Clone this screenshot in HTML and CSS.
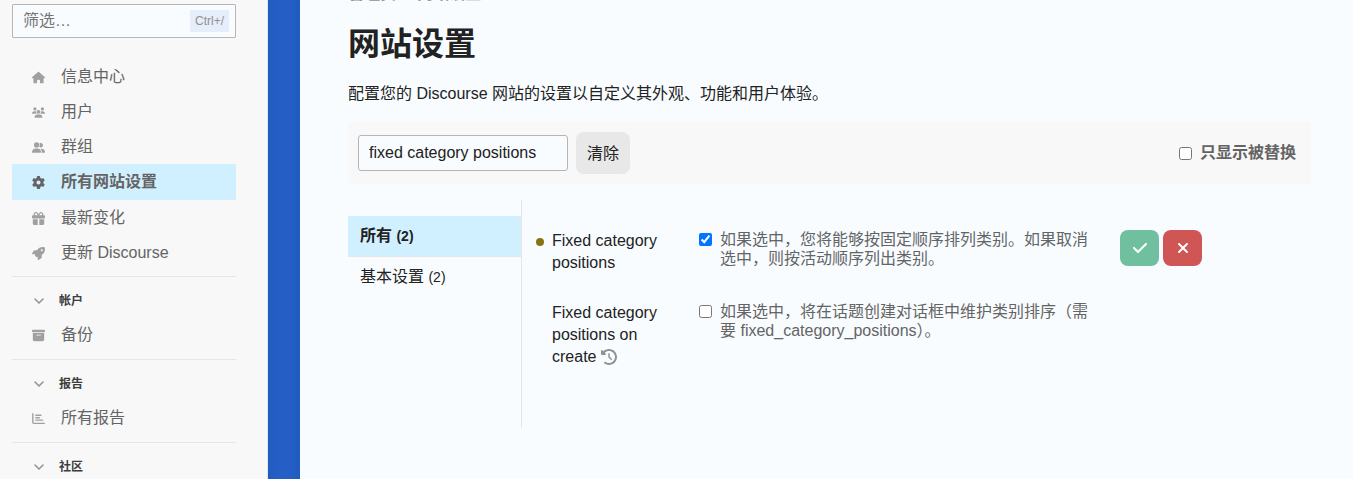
FILE: index.html
```html
<!DOCTYPE html>
<html lang="zh-CN">
<head>
<meta charset="utf-8">
<title>网站设置</title>
<link rel="stylesheet" href="styles.css">
</head>
<body>
<div class="layout">
  <aside class="sidebar">
    <div class="search">
      <input class="search-input" type="text" placeholder="筛选…" aria-label="筛选">
      <kbd class="shortcut">Ctrl+/</kbd>
    </div>
    <nav class="side-nav">
      <div class="group">
        <a class="link" href="#"><svg class="icon" viewBox="0 0 576 512"><path d="M575.8 255.5c0 18-15 32.1-32 32.1h-32l.7 160.2c0 2.7-.2 5.4-.5 8.1V472c0 22.1-17.9 40-40 40H392c-22.1 0-40-17.9-40-40V384c0-17.7-14.3-32-32-32H256c-17.7 0-32 14.3-32 32v88c0 22.1-17.9 40-40 40H104c-22.1 0-40-17.9-40-40V287.6H32c-18 0-32-14-32-32.1c0-9 3-17 10-24L266.4 8c7-7 15-8 22-8s15 2 21 7L564.8 231.5c8 7 12 15 11 24z"/></svg>信息中心</a>
        <a class="link" href="#"><svg class="icon" viewBox="0 0 640 512"><path d="M144 0a80 80 0 1 1 0 160A80 80 0 1 1 144 0zM512 0a80 80 0 1 1 0 160A80 80 0 1 1 512 0zM0 298.7C0 239.8 47.8 192 106.7 192h42.7c15.9 0 31 3.5 44.6 9.7c-1.3 7.2-1.9 14.7-1.9 22.3c0 38.2 16.8 72.5 43.3 96c-.2 0-.4 0-.7 0H21.3C9.6 320 0 310.4 0 298.7zM405.3 320c-.2 0-.4 0-.7 0c26.6-23.5 43.3-57.8 43.3-96c0-7.6-.7-15-1.9-22.3c13.6-6.3 28.7-9.7 44.6-9.7h42.7C592.2 192 640 239.8 640 298.7c0 11.8-9.6 21.3-21.3 21.3H405.3zM224 224a96 96 0 1 1 192 0 96 96 0 1 1 -192 0zM128 485.3C128 411.7 187.7 352 261.3 352H378.7C452.3 352 512 411.7 512 485.3c0 14.7-11.9 26.7-26.7 26.7H154.7c-14.7 0-26.7-11.9-26.7-26.7z"/></svg>用户</a>
        <a class="link" href="#"><svg class="icon" viewBox="0 0 640 512"><path d="M96 128a128 128 0 1 1 256 0A128 128 0 1 1 96 128zM0 482.3C0 383.8 79.8 304 178.3 304h91.4C368.2 304 448 383.8 448 482.3c0 16.4-13.3 29.7-29.7 29.7H29.7C13.3 512 0 498.7 0 482.3zM609.3 512H471.4c5.4-9.4 8.6-20.3 8.6-32v-8c0-60.7-27.1-115.2-69.8-151.8c2.4-.1 4.7-.2 7.1-.2h61.4C567.8 320 640 392.2 640 481.3c0 17-13.8 30.7-30.7 30.7zM432 256c-31 0-59-12.6-79.3-32.9C372.4 196.5 384 163.6 384 128c0-26.8-6.6-52.1-18.3-74.3C384.3 40.1 407.2 32 432 32c61.9 0 112 50.1 112 112s-50.1 112-112 112z"/></svg>群组</a>
        <a class="link active" href="#"><svg class="icon" viewBox="0 0 512 512"><path d="M495.9 166.6c3.2 8.7 .5 18.4-6.4 24.6l-43.3 39.4c1.1 8.3 1.7 16.8 1.7 25.4s-.6 17.1-1.7 25.4l43.3 39.4c6.9 6.2 9.6 15.9 6.4 24.6c-4.4 11.9-9.7 23.3-15.8 34.3l-4.7 8.1c-6.6 11-14 21.4-22.1 31.2c-5.9 7.2-15.7 9.6-24.5 6.8l-55.7-17.7c-13.4 10.3-28.2 18.9-44 25.4l-12.5 57.1c-2 9.1-9 16.3-18.2 17.8c-13.8 2.3-28 3.5-42.5 3.5s-28.7-1.2-42.5-3.5c-9.2-1.5-16.2-8.7-18.2-17.8l-12.5-57.1c-15.8-6.5-30.6-15.1-44-25.4L83.1 425.9c-8.8 2.8-18.6 .3-24.5-6.8c-8.1-9.8-15.5-20.2-22.1-31.2l-4.7-8.1c-6.1-11-11.4-22.4-15.8-34.3c-3.2-8.7-.5-18.4 6.4-24.6l43.3-39.4C64.6 273.1 64 264.6 64 256s.6-17.1 1.7-25.4L22.4 191.2c-6.9-6.2-9.6-15.9-6.4-24.6c4.4-11.9 9.7-23.3 15.8-34.3l4.7-8.1c6.6-11 14-21.4 22.1-31.2c5.9-7.2 15.7-9.6 24.5-6.8l55.7 17.7c13.4-10.3 28.2-18.9 44-25.4l12.5-57.1c2-9.1 9-16.3 18.2-17.8C227.3 1.2 241.5 0 256 0s28.7 1.2 42.5 3.5c9.2 1.5 16.2 8.7 18.2 17.8l12.5 57.1c15.8 6.5 30.6 15.1 44 25.4l55.7-17.7c8.8-2.8 18.6-.3 24.5 6.8c8.1 9.8 15.5 20.2 22.1 31.2l4.7 8.1c6.1 11 11.4 22.4 15.8 34.3zM256 336a80 80 0 1 0 0-160 80 80 0 1 0 0 160z"/></svg>所有网站设置</a>
        <a class="link" href="#"><svg class="icon" viewBox="0 0 512 512"><path d="M190.5 68.8L225.3 128H224 152c-22.1 0-40-17.9-40-40s17.9-40 40-40h2.2c14.9 0 28.8 7.9 36.3 20.8zM64 88c0 14.4 3.5 28 9.6 40H32c-17.7 0-32 14.3-32 32v64c0 17.7 14.3 32 32 32H480c17.7 0 32-14.3 32-32V160c0-17.7-14.3-32-32-32H438.4c6.1-12 9.6-25.6 9.6-40c0-48.6-39.4-88-88-88h-2.2c-31.9 0-61.5 16.9-77.7 44.4L256 85.5l-24.1-41C215.7 16.9 186.1 0 154.2 0H152C103.4 0 64 39.4 64 88zm336 0c0 22.1-17.9 40-40 40H288h-1.3l34.8-59.2C329.1 55.9 342.9 48 357.8 48H360c22.1 0 40 17.9 40 40zM32 288V464c0 26.5 21.5 48 48 48H224V288H32zM288 512H432c26.5 0 48-21.5 48-48V288H288V512z"/></svg>最新变化</a>
        <a class="link" href="#"><svg class="icon" viewBox="0 0 512 512"><path d="M156.6 384.9L125.7 354c-8.5-8.5-11.5-20.8-7.7-32.2c3-8.9 7-20.5 11.8-33.8L24 288c-8.6 0-16.6-4.6-20.9-12.1s-4.2-16.7 .2-24.1l52.5-88.5c13-21.9 36.5-35.3 61.9-35.3l82.3 0c2.4-4 4.8-7.7 7.2-11.3C289.1-4.1 411.1-8.1 483.9 5.3c11.6 2.1 20.6 11.2 22.8 22.8c13.4 72.9 9.3 194.8-111.4 276.7c-3.5 2.4-7.3 4.8-11.3 7.2v82.3c0 25.4-13.4 49-35.3 61.9l-88.5 52.5c-7.4 4.4-16.6 4.5-24.1 .2s-12.1-12.2-12.1-20.9V380.8c-14.1 4.9-26.4 8.9-35.7 11.9c-11.2 3.6-23.4 .5-31.8-7.8zM384 168a40 40 0 1 0 0-80 40 40 0 1 0 0 80z"/></svg>更新 Discourse</a>
      </div>
      <div class="group">
        <button class="heading" type="button"><svg class="chevron" viewBox="0 0 10 10"><path d="M1 3l4 4 4-4"/></svg>帐户</button>
        <a class="link" href="#"><svg class="icon" viewBox="0 0 512 512"><path fill-rule="evenodd" d="M32 32H480c17.7 0 32 14.3 32 32V96c0 17.7-14.3 32-32 32H32C14.3 128 0 113.7 0 96V64C0 46.3 14.3 32 32 32zM32 160H480V416c0 35.3-28.7 64-64 64H96c-35.3 0-64-28.7-64-64V160zm128 80c0 8.8 7.2 16 16 16H336c8.8 0 16-7.2 16-16s-7.2-16-16-16H176c-8.8 0-16 7.2-16 16z"/></svg>备份</a>
      </div>
      <div class="group">
        <button class="heading" type="button"><svg class="chevron" viewBox="0 0 10 10"><path d="M1 3l4 4 4-4"/></svg>报告</button>
        <a class="link" href="#"><svg class="icon lines" viewBox="0 0 512 512"><path d="M32 64V400c0 26 22 48 48 48H480M150 128H352M150 224H288M150 320H416"/></svg>所有报告</a>
      </div>
      <div class="group">
        <button class="heading" type="button"><svg class="chevron" viewBox="0 0 10 10"><path d="M1 3l4 4 4-4"/></svg>社区</button>
      </div>
    </nav>
  </aside>
  <div class="stripe"></div>
  <main class="main">
    <nav class="crumbs"><a href="#">管理员</a><span>›</span><a href="#">网站设置</a></nav>
    <h1 class="title">网站设置</h1>
    <p class="intro">配置您的 Discourse 网站的设置以自定义其外观、功能和用户体验。</p>
    <div class="controls">
      <input class="filter" type="text" value="fixed category positions" aria-label="搜索设置">
      <button class="clear" type="button">清除</button>
      <label class="overridden"><input class="check" type="checkbox">只显示被替换</label>
    </div>
    <div class="body">
      <nav class="categories">
        <a class="category current" href="#">所有 <span class="count">(2)</span></a>
        <a class="category" href="#">基本设置 <span class="count">(2)</span></a>
      </nav>
      <div class="settings">
        <div class="setting changed">
          <h3 class="name">Fixed category positions</h3>
          <label class="value"><input class="check" type="checkbox" checked><span>如果选中，您将能够按固定顺序排列类别。如果取消选中，则按活动顺序列出类别。</span></label>
          <div class="actions">
            <button class="action ok" type="button" aria-label="保存"><svg viewBox="0 0 448 512"><path d="M438.6 105.4c12.5 12.5 12.5 32.8 0 45.3l-256 256c-12.5 12.5-32.8 12.5-45.3 0l-128-128c-12.5-12.5-12.5-32.8 0-45.3s32.8-12.5 45.3 0L160 338.7 393.4 105.4c12.5-12.5 32.8-12.5 45.3 0z"/></svg></button>
            <button class="action cancel" type="button" aria-label="取消"><svg viewBox="0 0 384 512"><path d="M342.6 150.6c12.5-12.5 12.5-32.8 0-45.3s-32.8-12.5-45.3 0L192 210.7 86.6 105.4c-12.5-12.5-32.8-12.5-45.3 0s-12.5 32.8 0 45.3L146.7 256 41.4 361.4c-12.5 12.5-12.5 32.8 0 45.3s32.8 12.5 45.3 0L192 301.3 297.4 406.6c12.5 12.5 32.8 12.5 45.3 0s12.5-32.8 0-45.3L237.3 256 342.6 150.6z"/></svg></button>
          </div>
        </div>
        <div class="setting">
          <h3 class="name">Fixed category positions on create <a class="history" href="#" aria-label="历史"><svg viewBox="0 0 512 512"><path d="M75 75L41 41C25.9 25.9 0 36.6 0 57.9V168c0 13.3 10.7 24 24 24H134.1c21.4 0 32.1-25.9 17-41l-30.8-30.8C155 85.5 203 64 256 64c106 0 192 86 192 192s-86 192-192 192c-40.8 0-78.6-12.7-109.7-34.4c-14.5-10.1-34.4-6.6-44.6 7.9s-6.6 34.4 7.9 44.6C151.2 495 201.7 512 256 512c141.4 0 256-114.6 256-256S397.4 0 256 0C185.3 0 121.3 28.7 75 75zm181 53c-13.3 0-24 10.7-24 24V256c0 6.4 2.5 12.5 7 17l72 72c9.4 9.4 24.6 9.4 33.9 0s9.4-24.6 0-33.9l-65-65V152c0-13.3-10.7-24-24-24z"/></svg></a></h3>
          <label class="value"><input class="check" type="checkbox"><span>如果选中，将在话题创建对话框中维护类别排序（需要 fixed_category_positions）。</span></label>
        </div>
      </div>
    </div>
  </main>
</div>
</body>
</html>
```
FILE: styles.css
```css
* {
  box-sizing: border-box;
}

body {
  margin: 0;
  background: #f8fcff;
  color: #222;
  font: 16px/22px "Liberation Sans", "Noto Sans CJK SC", sans-serif;
}

button,
input,
kbd {
  font: inherit;
  color: inherit;
}

a {
  color: inherit;
  text-decoration: none;
}

.layout {
  display: flex;
  height: 100vh;
  overflow: hidden;
}

.sidebar {
  flex: 0 0 268px;
  min-width: 0;
  padding: 4px 31px 0 12px;
  border-right: 1px solid #e6e6e6;
  background: #f8f8f8;
  color: #646464;
}

.stripe {
  flex: 0 0 32px;
  background: linear-gradient(90deg, #205bc0, #255fc6 30%, #255fc6 70%, #205bc0);
}

.search {
  display: flex;
  align-items: center;
  height: 34px;
  margin-bottom: 21px;
  padding: 0 6px 0 10px;
  border: 1px solid #b5b5b5;
  border-radius: 1px;
  background: #f8fcff;
}

.search-input {
  flex: 1;
  width: 0;
  min-width: 0;
  padding: 0;
  border: 0;
  outline: 0;
  background: transparent;
}

.search-input::placeholder {
  color: #767676;
  opacity: 1;
}

.shortcut {
  padding: 0 5px;
  background: #e6edfb;
  color: #919191;
  font-size: 12px;
}

.link {
  display: flex;
  align-items: center;
  gap: 16px;
  height: 35px;
  padding-left: 20px;
}

.active {
  height: 36px;
  background: #d1f0ff;
  font-weight: bold;
}

.icon {
  width: 13px;
  height: 13px;
  margin-top: 2px;
  fill: #a0a0a0;
}

.active .icon {
  margin-top: 0;
  fill: #646464;
}

.lines {
  fill: none;
  stroke: #a0a0a0;
  stroke-width: 56;
  stroke-linecap: round;
}

.group {
  padding-bottom: 6px;
}

.group + .group {
  padding: 8px 0 7px;
  border-top: 1px solid #e6e6e6;
}

.heading {
  display: flex;
  align-items: center;
  gap: 15px;
  width: 100%;
  height: 32px;
  padding: 0 0 0 22px;
  border: 0;
  background: none;
  color: #3d3d3d;
  font-size: 12px;
  font-weight: bold;
}

.chevron {
  width: 10px;
  height: 10px;
  fill: none;
  stroke: #919191;
  stroke-width: 1.5;
  stroke-linecap: round;
}

.main {
  flex: 1;
  min-width: 0;
  padding: 0 42px 0 48px;
}

.crumbs {
  display: flex;
  gap: 8px;
  margin-top: -17px;
  color: #919191;
  font-weight: bold;
}

.title {
  margin: 19px 0;
  font-size: 32px;
  line-height: 40px;
}

.intro {
  margin: 0 0 17px;
}

.controls {
  display: flex;
  align-items: center;
  gap: 8px;
  margin-bottom: 16px;
  padding: 10px 15px 10px 10px;
  background: #f8f8f8;
}

.filter {
  width: 210px;
  height: 36px;
  padding: 0 10px;
  border: 1px solid #b5b5b5;
  border-radius: 3px;
  background: #f8fcff;
}

.clear {
  height: 42px;
  padding: 2px 11px 0;
  border: 0;
  border-radius: 8px;
  background: #e8e8e8;
}

.overridden {
  display: flex;
  align-items: center;
  gap: 8px;
  margin-left: auto;
  color: #646464;
  font-weight: bold;
}

.check {
  flex: none;
  width: 13px;
  height: 13px;
  margin: 0;
}

.body {
  display: flex;
}

.categories {
  flex: 0 0 174px;
  min-height: 228px;
  padding-top: 16px;
  border-right: 1px solid #e6e6e6;
}

.category {
  display: block;
  padding: 9px 12px;
}

.current {
  border-bottom: 1px solid #e6e6e6;
  background: #d1f0ff;
  font-weight: bold;
}

.count {
  font-size: 14px;
}

.settings {
  flex: 1;
  padding: 30px 0 0 14px;
}

.setting {
  display: flex;
  align-items: flex-start;
  margin-bottom: 28px;
  padding-left: 16px;
}

.changed {
  padding-left: 0;
}

.changed::before {
  content: "";
  width: 8px;
  height: 8px;
  margin: 8px 8px 0 0;
  border-radius: 50%;
  background: #867411;
}

.name {
  flex: 0 0 120px;
  margin: 0 27px 0 0;
  font-size: 16px;
  font-weight: normal;
}

.history svg {
  width: 16px;
  height: 16px;
  fill: #919191;
  vertical-align: -3px;
}

.value {
  display: flex;
  flex: 0 1 389px;
  gap: 8px;
  color: #646464;
  line-height: 19px;
}

.value .check {
  margin-top: 3px;
}

.actions {
  display: flex;
  gap: 4px;
  margin-left: 32px;
}

.action {
  display: flex;
  align-items: center;
  justify-content: center;
  width: 39px;
  height: 36px;
  padding: 0;
  border: 0;
  border-radius: 8px;
}

.action svg {
  height: 16px;
  fill: #fff;
}

.ok {
  background: #70bf9f;
}

.cancel {
  background: #d05555;
}
```
